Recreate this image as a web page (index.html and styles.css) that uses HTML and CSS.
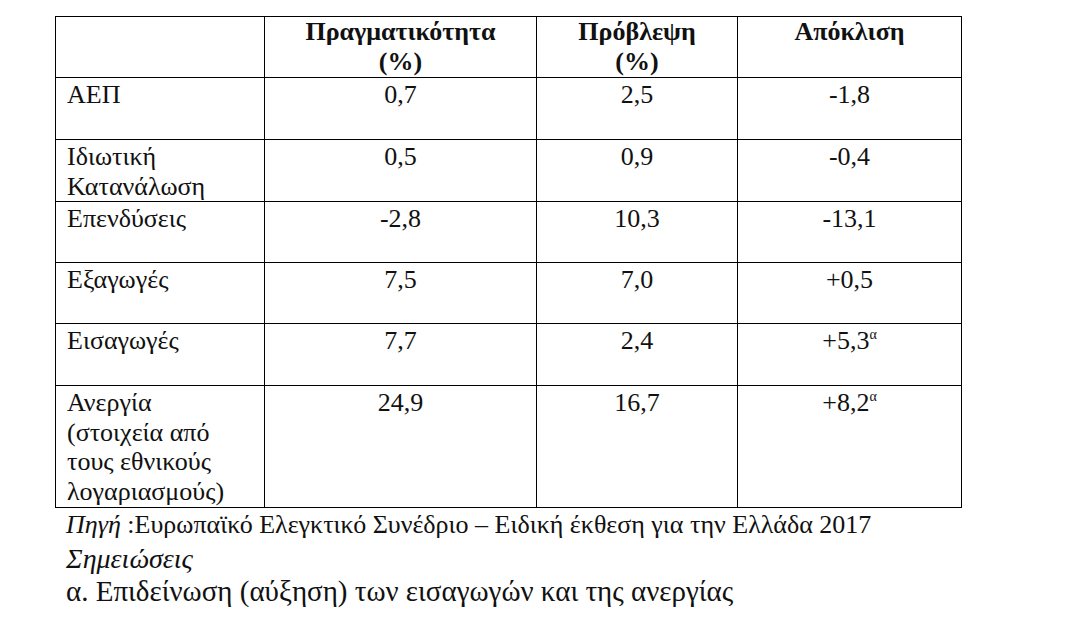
FILE: index.html
```html
<!DOCTYPE html>
<html lang="el">
<head>
<meta charset="utf-8">
<link rel="stylesheet" href="styles.css">
</head>
<body>
<div class="page">
  <table class="data">
    <colgroup>
      <col class="c1"><col class="c2"><col class="c3"><col class="c4">
    </colgroup>
    <tr class="r-head">
      <th></th>
      <th>Πραγματικότητα<br>(%)</th>
      <th>Πρόβλεψη<br>(%)</th>
      <th>Απόκλιση</th>
    </tr>
    <tr class="r62"><td>ΑΕΠ</td><td class="num">0,7</td><td class="num">2,5</td><td class="num">-1,8</td></tr>
    <tr class="r61"><td>Ιδιωτική<br>Κατανάλωση</td><td class="num">0,5</td><td class="num">0,9</td><td class="num">-0,4</td></tr>
    <tr class="r61"><td>Επενδύσεις</td><td class="num">-2,8</td><td class="num">10,3</td><td class="num">-13,1</td></tr>
    <tr class="r61"><td>Εξαγωγές</td><td class="num">7,5</td><td class="num">7,0</td><td class="num">+0,5</td></tr>
    <tr class="r62"><td>Εισαγωγές</td><td class="num">7,7</td><td class="num">2,4</td><td class="num">+5,3<span class="sup">α</span></td></tr>
    <tr class="r121"><td>Ανεργία<br>(στοιχεία από<br>τους εθνικούς<br>λογαριασμούς)</td><td class="num">24,9</td><td class="num">16,7</td><td class="num">+8,2<span class="sup">α</span></td></tr>
  </table>
  <p class="source"><i>Πηγή</i> :Ευρωπαϊκό Ελεγκτικό Συνέδριο – Ειδική έκθεση για την Ελλάδα 2017</p>
  <p class="notes-title">Σημειώσεις</p>
  <p class="note">α. Επιδείνωση (αύξηση) των εισαγωγών και της ανεργίας</p>
</div>
</body>
</html>
```

FILE: styles.css
```css
html, body {
  margin: 0;
  padding: 0;
  background: #ffffff;
}
.page {
  padding: 16px 0 0 55px;
  color: #111111;
}
.page, .page * {
  font-family: "Times New Roman", "Liberation Serif", serif !important;
}
.data {
  border-collapse: collapse;
  table-layout: fixed;
  width: 906px;
  font-size: 26px;
  line-height: 29.6px;
}
.c1 { width: 209px; }
.c2 { width: 272px; }
.c3 { width: 201px; }
.c4 { width: 224px; }
.data th, .data td {
  border: 1px solid #000000;
  vertical-align: top;
  padding: 2px 11px 0 11px;
  text-align: left;
}
.data th {
  font-weight: bold;
  text-align: center;
  line-height: 29.5px;
  padding-top: 0;
}
.data td.num {
  text-align: center;
}
.r-head { height: 61px; }
.r61 { height: 61px; }
.r62 { height: 62px; }
.r121 { height: 121px; }
.sup {
  font-size: 14px;
  line-height: 0;
  vertical-align: 10px;
}
.source {
  margin: 2px 0 0 0;
  padding-left: 11px;
  font-size: 26px;
  line-height: 30px;
}
.notes-title {
  margin: 3px 0 0 0;
  padding-left: 11px;
  font-size: 28px;
  font-style: italic;
  line-height: 32px;
}
.note {
  margin: 0;
  padding-left: 11px;
  font-size: 29px;
  line-height: 33px;
}
```
